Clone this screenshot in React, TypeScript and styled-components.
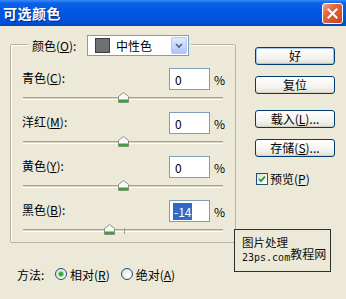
import React from 'react';
import styled, { createGlobalStyle } from 'styled-components';

const GlobalStyle = createGlobalStyle`
  html, body {
    margin: 0;
    padding: 0;
    background: #ece9d8;
  }
`;

const FONT = `"Noto Sans CJK SC", "Liberation Sans", sans-serif`;

const Window = styled.div`
  position: relative;
  width: 346px;
  height: 299px;
  overflow: hidden;
  background: #ece9d8;
  font-family: ${FONT};
  font-size: 12px;
  color: #000;
  display: flex;
  flex-direction: column;
`;

const TitleBar = styled.div`
  height: 26px;
  flex: none;
  display: flex;
  align-items: center;
  justify-content: space-between;
  padding: 0 3px 0 3px;
  background: linear-gradient(
    to bottom,
    #3a8cf6 0%,
    #0a62e8 12%,
    #0058e4 45%,
    #0052dc 80%,
    #0046c4 100%
  );
`;

const Title = styled.span`
  color: #fff;
  font-weight: bold;
  font-size: 14px;
  letter-spacing: 0.5px;
  text-shadow: 1px 1px 0 #0b2a8c;
`;

const CloseButton = styled.div`
  width: 19px;
  height: 19px;
  border: 1px solid #fff;
  border-radius: 3px;
  background: linear-gradient(135deg, #f2a587 0%, #e4663f 35%, #c9431e 100%);
  display: flex;
  align-items: center;
  justify-content: center;
`;

const Body = styled.div`
  flex: 1;
  display: flex;
  flex-direction: column;
`;

const Main = styled.div`
  display: flex;
  margin-top: 18px;
  padding-left: 10px;
`;

const GroupBox = styled.div`
  box-sizing: border-box;
  width: 226px;
  height: 199px;
  border: 1px solid #b7b5a6;
  box-shadow: inset 1px 1px 0 #fff;
  border-radius: 2px;
  display: flex;
  flex-direction: column;
`;

const Header = styled.div`
  display: flex;
  align-self: flex-start;
  align-items: center;
  margin: -10px 0 0 17px;
  padding: 0 2px 0 4px;
  background: #ece9d8;
  height: 21px;
`;

const HeaderLabel = styled.span`
  width: 55px;
`;

const Select = styled.div`
  box-sizing: border-box;
  width: 102px;
  height: 21px;
  border: 1px solid #7f9db9;
  background: #fff;
  display: flex;
  align-items: center;
  padding: 0 1px 0 7px;
`;

const Swatch = styled.div`
  box-sizing: border-box;
  width: 15px;
  height: 15px;
  border: 1px solid #3c3c3c;
  background: #707070;
`;

const SelectText = styled.span`
  margin-left: 6px;
  flex: 1;
`;

const ArrowButton = styled.div`
  box-sizing: border-box;
  width: 16px;
  height: 17px;
  border: 1px solid #b5c8f3;
  border-radius: 2px;
  background: linear-gradient(to bottom, #e0e9fd 0%, #c3d4fb 60%, #b0c6f7 100%);
  display: flex;
  align-items: center;
  justify-content: center;
`;

const Rows = styled.div`
  margin-top: 12px;
  padding: 0 12px 0 11px;
  display: flex;
  flex-direction: column;
  gap: 6px;
`;

const Row = styled.div`
  display: flex;
  flex-direction: column;
`;

const InputRow = styled.div`
  display: flex;
  align-items: center;
  height: 22px;
`;

const RowLabel = styled.span`
  flex: 1;
  margin-top: -4px;
`;

const NumberBox = styled.div`
  box-sizing: border-box;
  width: 41px;
  height: 22px;
  border: 1px solid #7f9db9;
  background: #fff;
  padding-left: 5px;
  display: flex;
  align-items: center;
`;

const Selected = styled.span`
  background: #316ac5;
  color: #fff;
  padding: 0 1px;
  margin-left: -2px;
`;

const Percent = styled.span`
  margin-left: 4px;
  width: 9px;
`;

const Slider = styled.div`
  position: relative;
  height: 16px;
  margin-left: 1px;
`;

const Track = styled.div`
  position: absolute;
  left: 0;
  right: 0;
  top: 7px;
  height: 1px;
  border-top: 1px solid #a5a497;
  border-bottom: 1px solid #fff;
  background: #d6d3c4;
`;

const Tick = styled.div`
  position: absolute;
  top: 6px;
  width: 1px;
  height: 6px;
  background: #a09f94;
`;

const Thumb = styled.svg`
  position: absolute;
  top: 2px;
`;

const Underline = styled.span`
  text-decoration: underline;
`;

const RightCol = styled.div`
  margin-left: 19px;
  margin-top: 3px;
  display: flex;
  flex-direction: column;
  width: 80px;
`;

const Button = styled.div<{ $default?: boolean; $gap: number }>`
  box-sizing: border-box;
  height: 18px;
  margin-top: ${(p) => p.$gap}px;
  border: 1px solid #003c74;
  border-radius: 3px;
  background: linear-gradient(to bottom, #ffffff 0%, #f4f3ee 60%, #e3e1d6 100%);
  box-shadow: ${(p) => (p.$default ? 'inset 0 0 0 1px #a9c4f0' : 'inset 0 -1px 0 #d6d0c5')};
  display: flex;
  align-items: center;
  justify-content: center;
  line-height: 1;
`;

const CheckRow = styled.label`
  display: flex;
  align-items: center;
  margin-top: 13px;
  padding-left: 1px;
`;

const CheckBox = styled.div`
  box-sizing: border-box;
  width: 12px;
  height: 12px;
  border: 1px solid #1c5180;
  background: linear-gradient(135deg, #dcdcd6 0%, #f4f4f0 60%, #fff 100%);
  display: flex;
  align-items: center;
  justify-content: center;
  margin-right: 2px;
`;

const MethodRow = styled.div`
  display: flex;
  align-items: center;
  margin-top: 23px;
  padding-left: 17px;
  height: 16px;
`;

const MethodLabel = styled.span`
  width: 38px;
`;

const RadioOption = styled.div<{ $gap: number }>`
  display: flex;
  align-items: center;
  margin-left: ${(p) => p.$gap}px;
`;

const Radio = styled.div`
  box-sizing: border-box;
  width: 12px;
  height: 12px;
  border-radius: 50%;
  border: 1px solid #1c5180;
  background: radial-gradient(circle at 65% 65%, #ffffff 0%, #e6e6df 70%, #d4d3cb 100%);
  display: flex;
  align-items: center;
  justify-content: center;
  margin-right: 3px;
`;

const RadioDot = styled.div`
  width: 4px;
  height: 4px;
  border-radius: 50%;
  background: #2fa52f;
  box-shadow: 0 0 0 1px #8fd58f;
`;

const Watermark = styled.div`
  position: absolute;
  left: 234px;
  top: 229px;
  box-sizing: border-box;
  width: 97px;
  height: 43px;
  border: 1px solid #2e2e2e;
  background: #ece9d8;
  display: flex;
  padding: 5px 0 0 7px;
  color: #111;
  white-space: nowrap;
`;

const WatermarkLines = styled.div`
  display: flex;
  flex-direction: column;
  line-height: 15px;
  font-size: 11.5px;
  flex: none;
`;

const Mono = styled.span`
  font-family: "DejaVu Sans Mono", "Liberation Mono", monospace;
  font-size: 10px;
`;

const WatermarkBig = styled.span`
  flex: none;
  font-size: 12px;
  line-height: 17px;
  margin-top: 10px;
  margin-left: 0;
`;

const channels = [
  { name: '青色', key: 'C', value: 0 },
  { name: '洋红', key: 'M', value: 0 },
  { name: '黄色', key: 'Y', value: 0 },
  { name: '黑色', key: 'B', value: -14, selected: true },
];

const TRACK = 200;

const SliderThumb = ({ value }: { value: number }) => {
  const x = ((value + 100) / 200) * TRACK - 5.5;
  return (
    <Thumb width="11" height="11" viewBox="0 0 11 11" style={{ left: x }}>
      <path d="M5.5 0.5 L10.5 4.5 V10.5 H0.5 V4.5 Z" fill="#fbfbf8" stroke="#8d8f86" />
      <rect x="1" y="7.5" width="9" height="2.5" fill="#2ea82e" />
    </Thumb>
  );
};

export default function App() {
  return (
    <>
      <GlobalStyle />
      <Window>
        <TitleBar>
          <Title>可选颜色</Title>
          <CloseButton>
            <svg width="11" height="11" viewBox="0 0 11 11">
              <path d="M1.5 1.5 L9.5 9.5 M9.5 1.5 L1.5 9.5" stroke="#fff" strokeWidth="2" strokeLinecap="square" />
            </svg>
          </CloseButton>
        </TitleBar>
        <Body>
          <Main>
            <GroupBox>
              <Header>
                <HeaderLabel>
                  颜色(<Underline>O</Underline>):
                </HeaderLabel>
                <Select>
                  <Swatch />
                  <SelectText>中性色</SelectText>
                  <ArrowButton>
                    <svg width="8" height="6" viewBox="0 0 8 6">
                      <path d="M1 1 L4 4 L7 1" fill="none" stroke="#4d6185" strokeWidth="1.6" />
                    </svg>
                  </ArrowButton>
                </Select>
              </Header>
              <Rows>
                {channels.map((c) => (
                  <Row key={c.key}>
                    <InputRow>
                      <RowLabel>
                        {c.name}(<Underline>{c.key}</Underline>):
                      </RowLabel>
                      <NumberBox>
                        {c.selected ? <Selected>{c.value}</Selected> : c.value}
                      </NumberBox>
                      <Percent>%</Percent>
                    </InputRow>
                    <Slider>
                      <Track />
                      {c.selected && <Tick style={{ left: TRACK / 2 + 1 }} />}
                      <SliderThumb value={c.value} />
                    </Slider>
                  </Row>
                ))}
              </Rows>
            </GroupBox>
            <RightCol>
              <Button $default $gap={0}>好</Button>
              <Button $gap={11}>复位</Button>
              <Button $gap={16}>
                载入(<Underline>L</Underline>)...
              </Button>
              <Button $gap={11}>
                存储(<Underline>S</Underline>)...
              </Button>
              <CheckRow>
                <CheckBox>
                  <svg width="8" height="8" viewBox="0 0 8 8">
                    <path d="M1 4 L3 6.2 L7 1.5" fill="none" stroke="#21a121" strokeWidth="1.8" />
                  </svg>
                </CheckBox>
                预览(<Underline>P</Underline>)
              </CheckRow>
            </RightCol>
          </Main>
          <MethodRow>
            <MethodLabel>方法:</MethodLabel>
            <RadioOption $gap={0}>
              <Radio>
                <RadioDot />
              </Radio>
              相对(<Underline>R</Underline>)
            </RadioOption>
            <RadioOption $gap={11}>
              <Radio />
              绝对(<Underline>A</Underline>)
            </RadioOption>
          </MethodRow>
        </Body>
        <Watermark>
          <WatermarkLines>
            <span>图片处理</span>
            <Mono>23ps.com</Mono>
          </WatermarkLines>
          <WatermarkBig>教程网</WatermarkBig>
        </Watermark>
      </Window>
    </>
  );
}
